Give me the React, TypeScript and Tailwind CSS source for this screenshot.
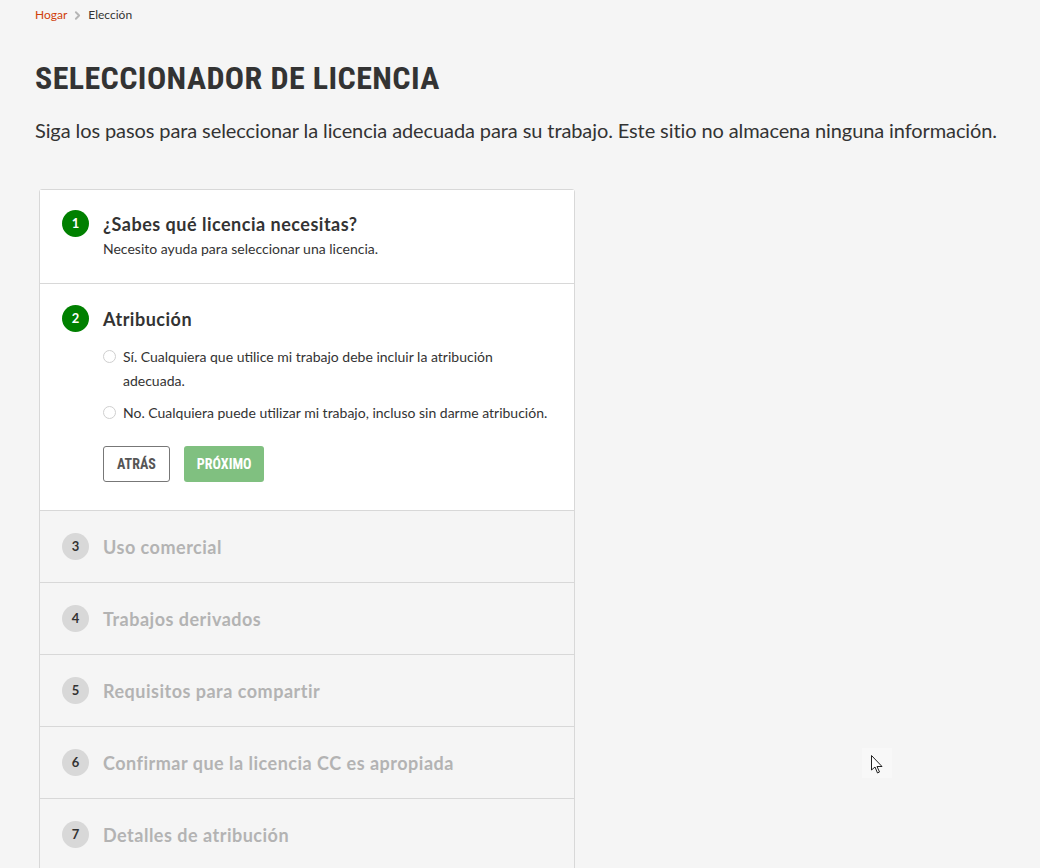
import { ChevronRight } from 'lucide-react';

const sans = 'font-["Source_Sans_Pro","Lato","Noto_Sans",sans-serif]';
const cond = 'font-["Roboto_Condensed","Liberation_Sans_Narrow","Roboto",sans-serif]';

const Circle = ({ n, active }: { n: number; active: boolean }) => (
  <div
    className={`w-[27px] h-[27px] rounded-full flex items-center justify-center text-[13px] font-bold shrink-0 ${
      active ? 'bg-[#008000] text-white' : 'bg-[#d8d8d8] text-[#333]'
    }`}
  >
    {n}
  </div>
);

const Radio = ({ children }: { children: React.ReactNode }) => (
  <label className="flex items-start gap-[7px] text-[14px] leading-[24px] text-[#333]">
    <span className="mt-[5px] w-[13px] h-[13px] rounded-full border border-[#cfcfcf] bg-white shrink-0" />
    <span>{children}</span>
  </label>
);

const disabled = [
  'Uso comercial',
  'Trabajos derivados',
  'Requisitos para compartir',
  'Confirmar que la licencia CC es apropiada',
  'Detalles de atribución',
];

export default function App() {
  return (
    <div className={`min-h-screen bg-[#f5f5f5] ${sans} text-[#333] relative overflow-hidden h-[868px]`}>
      <div className="px-[35px]">
        <nav className="flex items-center gap-[4px] pt-[7px] text-[12px] leading-[16px]">
          <span className="text-[#d0400a]">Hogar</span>
          <ChevronRight className="w-[13px] h-[13px] text-[#b5b5b5]" strokeWidth={3.5} />
          <span className="text-[#333]">Elección</span>
        </nav>

        <h1 className={`${cond} font-bold text-[32px] leading-[40px] mt-[35px] text-[#333] tracking-[0.4px]`}>
          SELECCIONADOR DE LICENCIA
        </h1>

        <p className="text-[20px] leading-[28px] mt-[18px] text-[#333] tracking-[-0.1px] whitespace-nowrap">
          Siga los pasos para seleccionar la licencia adecuada para su trabajo. Este sitio no almacena ninguna información.
        </p>
      </div>

      <div className="ml-[39px] mt-[45px] w-[536px] border border-[#d8d8d8] rounded-t-[3px]">
        <div className="bg-white px-[22px] pt-[20px] pb-[24px] border-b border-[#d8d8d8]">
          <div className="flex items-center gap-[14px]">
            <Circle n={1} active />
            <h2 className="text-[18px] font-bold leading-[26px] text-[#333] tracking-[0.5px]">¿Sabes qué licencia necesitas?</h2>
          </div>
          <p className="ml-[41px] text-[14px] leading-[20px] mt-[2px]">Necesito ayuda para seleccionar una licencia.</p>
        </div>

        <div className="bg-white px-[22px] pt-[21px] pb-[28px] border-b border-[#d8d8d8]">
          <div className="flex items-center gap-[14px]">
            <Circle n={2} active />
            <h2 className="text-[18px] font-bold leading-[26px] text-[#333] tracking-[0.5px]">Atribución</h2>
          </div>
          <div className="ml-[41px] mt-[13px] flex flex-col gap-[8px]">
            <Radio>Sí. Cualquiera que utilice mi trabajo debe incluir la atribución adecuada.</Radio>
            <Radio>No. Cualquiera puede utilizar mi trabajo, incluso sin darme atribución.</Radio>
          </div>
          <div className={`ml-[41px] mt-[21px] flex gap-[14px] ${cond} font-bold text-[14px]`}>
            <button className="h-[36px] px-[13px] border border-[#777] rounded-[3px] bg-white text-[#555]">ATRÁS</button>
            <button className="h-[36px] px-[13px] rounded-[3px] bg-[#80c080] text-white">PRÓXIMO</button>
          </div>
        </div>

        {disabled.map((t, i) => (
          <div key={t} className="bg-[#f5f5f5] h-[72px] px-[22px] flex items-center gap-[14px] border-b border-[#d8d8d8]">
            <Circle n={i + 3} active={false} />
            <h2 className="text-[18px] font-bold leading-[26px] text-[#b3b3b3] tracking-[0.5px]">{t}</h2>
          </div>
        ))}
      </div>

      <div className="absolute left-[862px] top-[748px] w-[30px] h-[30px] bg-[#f8f8f8]">
        <svg width="12" height="20" viewBox="0 0 12 20" className="ml-[9px] mt-[7px]">
          <path d="M0.5 0.5 L0.5 15 L4 12 L6.5 18 L8.5 17 L6 11.5 L11 11.5 Z" fill="white" stroke="#222" strokeWidth="1" />
        </svg>
      </div>
    </div>
  );
}
